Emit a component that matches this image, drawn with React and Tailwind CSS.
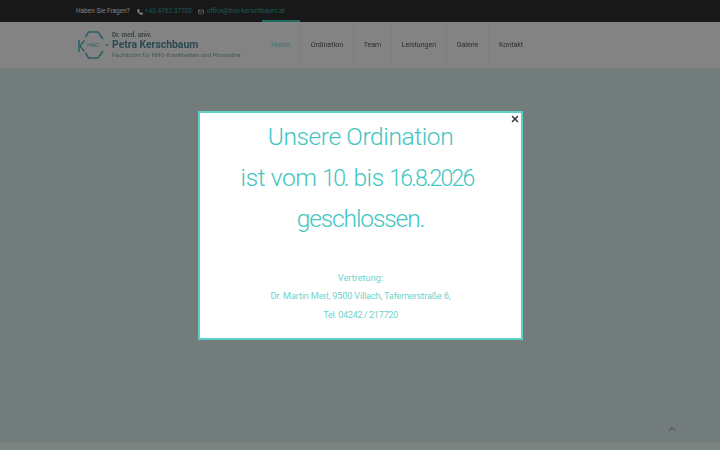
import { Phone, Mail, ChevronUp, X } from "lucide-react";

const navItems = ["Home", "Ordination", "Team", "Leistungen", "Galerie", "Kontakt"];

function Logo() {
  return (
    <div className="flex items-center">
      <svg width="32" height="28" viewBox="0 0 32 28" fill="none" className="mr-[2px]">
        <path d="M7.5 6 L10.5 1 H20 L25 8" stroke="#2c5f66" strokeWidth="1.5" />
        <path d="M7.5 22 L10.5 27 H20 L25 20" stroke="#2c5f66" strokeWidth="1.5" />
        <path d="M1 9 V21 M6.5 9.5 L2 15 L6.5 20.5" stroke="#2c5f66" strokeWidth="1.5" />
        <circle cx="29" cy="14" r="1.1" fill="#2c5f66" />
        <text x="9" y="16" fontSize="5.5" fill="#3d5a5e" fontFamily="Roboto, sans-serif">HNO</text>
      </svg>
      <div className="flex flex-col font-['Roboto',sans-serif] leading-none">
        <span className="text-[6.5px] font-bold text-[#3a4548] leading-[8px]">Dr. med. univ.</span>
        <span className="text-[10.4px] font-bold text-[#2a4a52] leading-[12px]">Petra Kerschbaum</span>
        <span className="text-[6.2px] text-[#46565c] leading-[9px]">Fachärztin für HNO-Krankheiten und Phoniatrie</span>
      </div>
    </div>
  );
}

export default function App() {
  return (
    <div className="relative w-[720px] h-[450px] overflow-hidden bg-[#727c7a] font-['Roboto',sans-serif]">
      <div className="flex flex-col h-full blur-[0.5px]">
        {/* Top bar */}
        <div className="h-[22px] bg-[#181818] pl-[76px] pt-[1px] flex items-center text-[6.5px] shrink-0">
          <span className="text-[#858585] mr-[7px]">Haben Sie Fragen?</span>
          <Phone className="w-[6px] h-[6px] text-[#8a8a8a] mr-[2px]" fill="#8a8a8a" />
          <span className="text-[#185c54] mr-[6px]">+43 4762 37700</span>
          <Mail className="w-[6px] h-[6px] text-[#8a8a8a] mr-[3px]" />
          <span className="text-[#185c54]">office@hno-kerschbaum.at</span>
        </div>

        {/* Nav */}
        <div className="h-[46px] bg-[#838383] pl-[78px] flex items-center shrink-0">
          <div className="w-[183.5px]">
            <Logo />
          </div>
          <nav className="flex h-full text-[7px] text-[#2e2e2e]">
            {navItems.map((item, i) => (
              <div
                key={item}
                className={`relative flex items-center px-[9.8px] ${i < 5 ? "border-r border-[#7e7e7e]" : ""} ${i === 0 ? "text-[#2a7d7c]" : ""}`}
              >
                {i === 0 && <div className="absolute -top-[2px] left-0 right-0 h-[2px] bg-[#1f6b62]" />}
                {item}
              </div>
            ))}
          </nav>
        </div>

        <div className="flex-1" />
        <div className="h-[7px] bg-[#7c8482] shrink-0" />
      </div>

      <ChevronUp className="absolute left-[666px] top-[423px] w-[12px] h-[12px] text-[#3a4240]" strokeWidth={2} />

      {/* Popup */}
      <div className="absolute left-[198px] top-[111px] w-[325px] h-[229px] bg-white border-2 border-[#5fd0c8] text-center text-[#3fc6c0] font-['Roboto',sans-serif]">
        <X className="absolute right-[1px] top-[1px] w-[10px] h-[10px] text-[#3a3a3a]" strokeWidth={4} />
        <div className="pt-[4px] text-[24.5px] font-light leading-[40.5px] tracking-[-0.4px]">
          <p>Unsere Ordination</p>
          <p className="pr-[7px]">
            ist vom <span className="text-[23px] tracking-[-1.8px]">10.</span> bis <span className="text-[23px] tracking-[-1.8px]">16.8.2026</span>
          </p>
          <p className="tracking-[-1.1px]">geschlossen.</p>
        </div>
        <div className="mt-[29px] text-[9.2px] leading-[18.5px] text-[#6fd3ce]">
          <p>Vertretung:</p>
          <p className="tracking-[-0.17px]">Dr. Martin Merl, 9500 Villach, Tafernerstraße 6,</p>
          <p className="tracking-[-0.4px]">Tel. 04242 / 217720</p>
        </div>
      </div>
    </div>
  );
}
